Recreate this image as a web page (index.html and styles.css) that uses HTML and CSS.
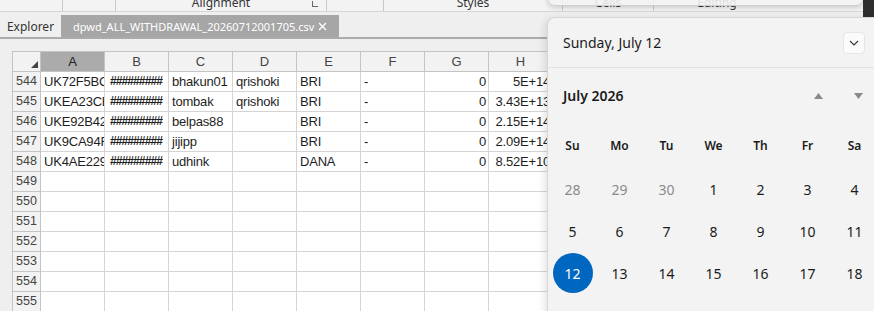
FILE: index.html
```html
<!DOCTYPE html>
<html lang="en">
<head>
  <meta charset="UTF-8" />
  <title>dpwd_ALL_WITHDRAWAL_20260712001705.csv</title>
  <link rel="stylesheet" href="styles.css">
</head>
<body>

  <div class="ribbon">
    <div class="group g-font"></div>
    <div class="group g-para"></div>
    <div class="group g-align">Alignment<span class="launcher"></span></div>
    <div class="group g-num"></div>
    <div class="group g-styles">Styles</div>
    <div class="group g-cells">Cells</div>
    <div class="group g-edit">Editing</div>
  </div>

  <div class="tabbar">
    <div class="tab">Explorer</div>
    <div class="tab active">
      <span>dpwd_ALL_WITHDRAWAL_20260712001705.csv</span>
      <svg class="close" width="9" height="9" viewBox="0 0 9 9"><path d="M1 1 L8 8 M8 1 L1 8" stroke="#fff" stroke-width="1.4"/></svg>
    </div>
  </div>

  <div class="sheet-area">
    <div class="sheet" id="sheet"></div>
  </div>

  <div class="flyout-top"></div>
  <div class="edge-strip"></div>

  <div class="calendar">
    <div class="cal-head">
      <span>Sunday, July 12</span>
      <button class="cal-drop">
        <svg width="10" height="6" viewBox="0 0 10 6"><path d="M1 1 L5 5 L9 1" fill="none" stroke="#333" stroke-width="1.1"/></svg>
      </button>
    </div>
    <div class="cal-month">
      <span class="cal-title">July 2026</span>
      <span class="nav-btn"><svg width="9" height="6" viewBox="0 0 9 6"><path d="M4.5 0 L9 6 L0 6 Z" fill="#8a8a8a"/></svg></span>
      <span class="nav-btn"><svg width="9" height="6" viewBox="0 0 9 6"><path d="M0 0 L9 0 L4.5 6 Z" fill="#8a8a8a"/></svg></span>
    </div>
    <div class="cal-grid" id="calGrid"></div>
  </div>

  <script>
    const cols = ["A", "B", "C", "D", "E", "F", "G", "H", "I"];
    const data = {
      544: ["UK72F5BC", "#########", "bhakun01", "qrishoki", "BRI", "-", "0", "5E+14"],
      545: ["UKEA23CB", "#########", "tombak", "qrishoki", "BRI", "-", "0", "3.43E+13"],
      546: ["UKE92B42", "#########", "belpas88", "", "BRI", "-", "0", "2.15E+14"],
      547: ["UK9CA94F", "#########", "jijipp", "", "BRI", "-", "0", "2.09E+14"],
      548: ["UK4AE229", "#########", "udhink", "", "DANA", "-", "0", "8.52E+10"]
    };

    const sheet = document.getElementById("sheet");
    let html = '<div class="hd corner"></div>';
    cols.forEach(c => {
      html += `<div class="hd col${c === "A" ? " sel" : ""}">${c}</div>`;
    });
    for (let r = 544; r <= 555; r++) {
      html += `<div class="hd rownum">${r}</div>`;
      const row = data[r] || [];
      cols.forEach((c, i) => {
        const v = row[i] || "";
        let cls = "cell";
        if (i === 1 && v) cls += " hash";
        if (i >= 6 && v) cls += " num";
        html += `<div class="${cls}">${v}</div>`;
      });
    }
    sheet.innerHTML = html;

    const grid = document.getElementById("calGrid");
    let days = "";
    ["Su", "Mo", "Tu", "We", "Th", "Fr", "Sa"].forEach(d => {
      days += `<div class="wd">${d}</div>`;
    });
    [28, 29, 30].forEach(d => { days += `<div class="day other">${d}</div>`; });
    for (let d = 1; d <= 25; d++) {
      days += `<div class="day${d === 12 ? " today" : ""}"><span>${d}</span></div>`;
    }
    grid.innerHTML = days;
  </script>

</body>
</html>
```

FILE: styles.css
```css
body {
  margin: 0;
  width: 874px;
  height: 311px;
  overflow: hidden;
  background-color: #efefef;
  font-family: "Liberation Sans", Arial, sans-serif;
  position: relative;
}

.ribbon {
  display: flex;
  align-items: flex-end;
  height: 11px;
  border-bottom: 1px solid #d6d6d6;
  background-color: #f3f3f3;
  overflow: hidden;
}

.group {
  height: 11px;
  display: flex;
  align-items: flex-end;
  justify-content: center;
  font-family: "Noto Sans", sans-serif;
  font-size: 12px;
  line-height: 16px;
  color: #333;
  border-right: 1px solid #c8c8c8;
  position: relative;
}

.g-font { width: 62px; }
.g-para { width: 52px; }
.g-align { width: 210px; }
.g-num { width: 56px; }
.g-styles { width: 178px; }
.g-cells { width: 90px; }
.g-edit { width: 126px; border-right: none; }

.launcher {
  position: absolute;
  right: 8px;
  bottom: 4px;
  width: 5px;
  height: 5px;
  border-left: 1px solid #666;
  border-bottom: 1px solid #666;
}

.tabbar {
  display: flex;
  margin-top: 3px;
  height: 22px;
  border-bottom: 2px solid #ababab;
  background-color: #efefef;
}

.tab {
  display: flex;
  align-items: center;
  justify-content: center;
  width: 61px;
  font-family: "Noto Sans", sans-serif;
  font-size: 12px;
  color: #333;
}

.tab.active {
  width: 278px;
  box-sizing: border-box;
  padding: 0 10px 0 12px;
  background-color: #a6a6a6;
  color: #fff;
  font-size: 11px;
  justify-content: space-between;
}

.close {
  margin-right: 2px;
}

.sheet-area {
  padding: 12px 0 0 12px;
}

.sheet {
  display: grid;
  grid-template-columns: 28px repeat(9, 64px);
  grid-auto-rows: 20px;
  border-left: 1px solid #c4c4c4;
  border-top: 1px solid #c4c4c4;
  background-color: #fff;
}

.hd, .cell {
  box-sizing: border-box;
  border-right: 1px solid #d4d4d4;
  border-bottom: 1px solid #d4d4d4;
  font-size: 13px;
  line-height: 19px;
  white-space: nowrap;
  overflow: hidden;
}

.hd {
  background-color: #f2f2f2;
  color: #444;
  text-align: center;
  border-color: #c4c4c4;
}

.hd.sel {
  background-color: #ababab;
  color: #222;
}

.corner {
  position: relative;
}

.corner::after {
  content: "";
  position: absolute;
  right: 2px;
  bottom: 3px;
  border-left: 7px solid transparent;
  border-bottom: 7px solid #444;
}

.rownum {
  font-size: 12.5px;
}

.cell {
  color: #1e1e1e;
  padding: 0 2px 0 3px;
  letter-spacing: -0.2px;
}

.cell.hash {
  letter-spacing: -0.9px;
  padding-left: 5px;
  font-weight: bold;
  font-size: 12px;
}

.cell.num {
  text-align: right;
  overflow: visible;
}

.flyout-top {
  position: absolute;
  left: 547px;
  top: -20px;
  width: 315px;
  height: 24px;
  background-color: rgba(243, 243, 243, 0.9);
  border: 1px solid #cfcfcf;
  border-radius: 0 0 8px 8px;
  box-shadow: 0 2px 4px rgba(0, 0, 0, 0.15);
}

.edge-strip {
  position: absolute;
  left: 863px;
  top: 0;
  width: 11px;
  height: 17px;
  background-color: #2e2e2e;
}

.calendar {
  position: absolute;
  left: 547px;
  top: 17px;
  width: 330px;
  height: 310px;
  background-color: #f3f3f3;
  border: 1px solid #d6d6d6;
  border-radius: 8px 0 0 0;
  box-shadow: -2px 2px 8px rgba(0, 0, 0, 0.12);
  font-family: "Noto Sans", sans-serif;
  color: #1b1b1b;
  overflow: hidden;
}

.cal-head {
  display: flex;
  align-items: center;
  justify-content: space-between;
  height: 49px;
  padding: 0 13px 0 15px;
  border-bottom: 1px solid #e2e2e2;
  font-size: 14px;
}

.cal-drop {
  width: 22px;
  height: 22px;
  display: flex;
  align-items: center;
  justify-content: center;
  padding: 0;
  background-color: #fbfbfb;
  border: 1px solid #e6e6e6;
  border-radius: 4px;
}

.cal-month {
  display: flex;
  align-items: center;
  height: 55px;
  padding-left: 15px;
}

.cal-title {
  flex: 1;
  font-size: 14px;
  font-weight: 600;
}

.nav-btn {
  width: 40px;
  display: flex;
  justify-content: center;
}

.cal-grid {
  display: grid;
  grid-template-columns: repeat(7, 47px);
  grid-template-rows: 45px;
  grid-auto-rows: 42px;
  padding-left: 1px;
}

.wd, .day {
  display: flex;
  align-items: center;
  justify-content: center;
}

.wd {
  font-size: 12px;
  font-weight: 600;
}

.day {
  font-size: 14px;
}

.day.other {
  color: #8b8b8b;
}

.day.today span {
  width: 40px;
  height: 40px;
  border-radius: 50%;
  background-color: #0067c0;
  color: #fff;
  display: flex;
  align-items: center;
  justify-content: center;
}
```
